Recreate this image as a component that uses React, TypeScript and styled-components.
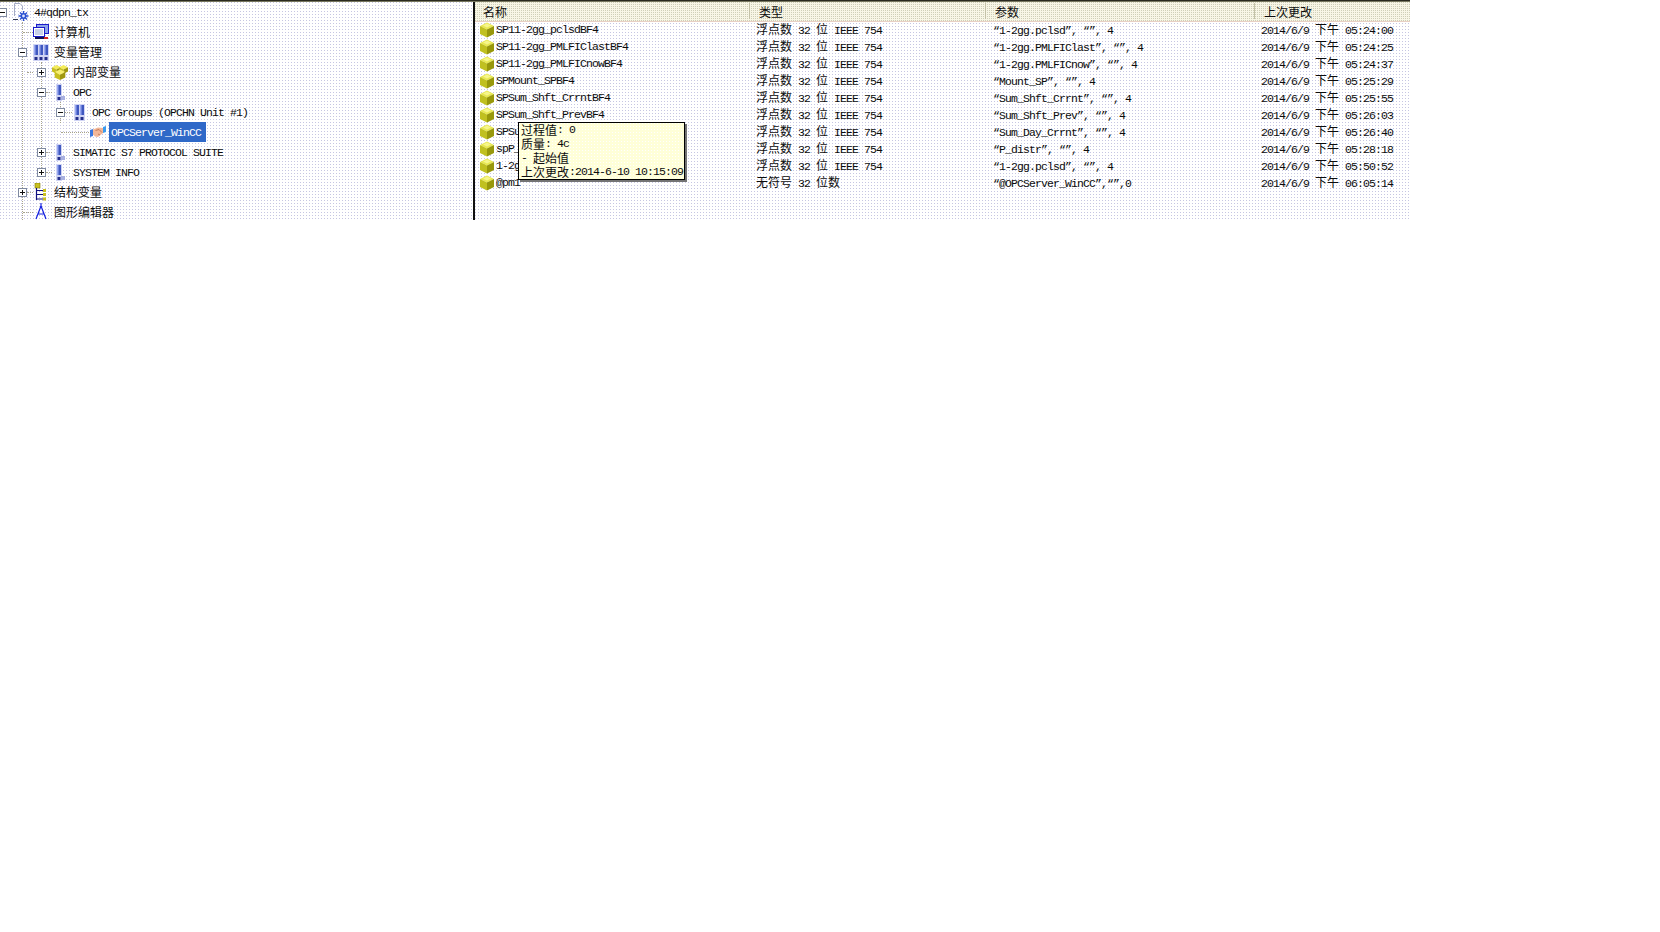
import React from "react";
import styled, { createGlobalStyle } from "styled-components";

const Global = createGlobalStyle`
  html, body { margin: 0; padding: 0; background: #fff; }
  body { font-family: "Liberation Mono", "Noto Sans CJK SC", monospace; }
`;

const Shot = styled.div`
  width: 1410px;
  height: 220px;
  display: flex;
  flex-direction: column;
  overflow: hidden;
  color: #0c0c0c;
`;
const TopRule = styled.div`
  height: 2px;
  flex: none;
  background: linear-gradient(#2a2a20 0 1px, #77775f 1px);
`;
const Panes = styled.div`
  flex: 1;
  display: flex;
  min-height: 0;
`;
const dots = `
  background-color: #fff;
  background-image: conic-gradient(from 270deg at 1px 1px, #c6c6e2 25%, transparent 0);
  background-size: 3px 3px;
`;
const TreePane = styled.div`
  width: 473px;
  flex: none;
  position: relative;
  overflow: hidden;
  ${dots}
`;
const Divider = styled.div`
  width: 2px;
  flex: none;
  background: #111;
`;
const ListPane = styled.div`
  flex: 1;
  position: relative;
  overflow: hidden;
  display: flex;
  flex-direction: column;
  ${dots}
`;

/* text */
const Latin = styled.span`
  font-family: "Liberation Mono", monospace;
  font-size: 11.5px;
  letter-spacing: -0.9px;
`;
const Cjk = styled.span`
  font-family: "Noto Sans CJK SC", sans-serif;
  font-size: 12px;
  letter-spacing: 0;
`;
const Txt = ({ s }: { s: string }) => (
  <>
    {s.split(/([\u4e00-\u9fff]+)/).map((p, i) =>
      p === "" ? null : /[\u4e00-\u9fff]/.test(p) ? <Cjk key={i}>{p}</Cjk> : <Latin key={i}>{p}</Latin>
    )}
  </>
);

/* tree */
const TreeRow = styled.div<{ $d: number }>`
  height: 20px;
  display: flex;
  align-items: center;
  white-space: pre;
  position: relative;
  z-index: 1;
  padding-left: ${(p) => Math.max(0, p.$d * 19 - 1)}px;
  line-height: 20px;
`;
const Toggle = styled.span<{ $d: number }>`
  width: 9px;
  height: 9px;
  flex: none;
  box-sizing: border-box;
  border: 1px solid #7f8aa0;
  background: #fff;
  position: relative;
  margin-left: ${(p) => (p.$d === 0 ? "-2px" : "0")};
  margin-right: 6px;
  &::before {
    content: "";
    position: absolute;
    left: 1px;
    top: 3px;
    width: 5px;
    height: 1px;
    background: #111;
  }
`;
const Plus = styled(Toggle)`
  &::after {
    content: "";
    position: absolute;
    left: 3px;
    top: 1px;
    width: 1px;
    height: 5px;
    background: #111;
  }
`;
const ToggleGap = styled.span`
  width: 15px;
  flex: none;
`;
const IconSlot = styled.span`
  width: 16px;
  height: 18px;
  flex: none;
  display: flex;
  align-items: center;
  justify-content: center;
  margin-right: 3px;
  svg { display: block; }
`;
const NodeLabel = styled.span<{ $sel?: boolean }>`
  padding: 0 5px 0 2px;
  height: 20px;
  display: block;
  background: ${(p) => (p.$sel ? "#2f69c8" : "transparent")};
  color: ${(p) => (p.$sel ? "#fff" : "inherit")};
`;
const GuideV = styled.i<{ $x: number; $top: number; $h: number }>`
  position: absolute;
  left: ${(p) => p.$x}px;
  top: ${(p) => p.$top}px;
  height: ${(p) => p.$h}px;
  border-left: 1px dotted #a8a48c;
`;
const GuideH = styled.i<{ $x: number; $top: number; $w: number }>`
  position: absolute;
  left: ${(p) => p.$x}px;
  top: ${(p) => p.$top}px;
  width: ${(p) => p.$w}px;
  border-top: 1px dotted #a8a48c;
`;

/* list */
const Header = styled.div`
  height: 20px;
  flex: none;
  display: grid;
  grid-template-columns: 274px 236px 269px 1fr;
  box-sizing: border-box;
  border-bottom: 1px solid #e8d0c4;
  background-color: #f8f6e6;
  background-image: conic-gradient(from 270deg at 1px 1px, #cfcfb8 25%, transparent 0);
  background-size: 2px 2px;
`;
const HeadCell = styled.div<{ $first?: boolean }>`
  padding-left: ${(p) => (p.$first ? "8px" : "9px")};
  border-left: ${(p) => (p.$first ? "none" : "1px solid #c4c2a8")};
  margin: 1px 0 0;
  height: 16px;
  display: flex;
  align-items: center;
`;
const Rows = styled.div`
  display: flex;
  flex-direction: column;
`;
const ListRow = styled.div`
  height: 17px;
  display: grid;
  grid-template-columns: 274px 236px 269px 1fr;
  grid-auto-rows: 16px;
  line-height: 16px;
  align-items: center;
  white-space: pre;
`;
const NameCell = styled.div`
  display: flex;
  align-items: center;
  padding-left: 4px;
`;
const CubeSlot = styled.span`
  width: 16px;
  height: 16px;
  flex: none;
  margin-right: 1px;
  svg { display: block; }
`;
const Cell = styled.div<{ $pad: number }>`
  padding-left: ${(p) => p.$pad}px;
`;

/* tooltip */
const Tip = styled.div`
  position: absolute;
  left: 43px;
  top: 120px;
  width: 167px;
  height: 58px;
  box-sizing: border-box;
  border: 1px solid #000;
  padding: 0 0 0 2px;
  background-color: #ffffd8;
  background-image: conic-gradient(from 270deg at 1px 1px, #fff 25%, transparent 0);
  background-size: 3px 3px;
  box-shadow: 2px 2px 0 rgba(70, 70, 70, 0.75);
  white-space: pre;
  z-index: 2;
`;
const TipLine = styled.div`
  height: 14px;
  line-height: 14px;
  display: flex;
  align-items: center;
`;

/* icons */
const Cube = () => (
  <svg width="16" height="16" viewBox="0 0 16 16">
    <polygon points="8,0.5 15,4 8,7.5 1,4" fill="#e8e850" />
    <polygon points="1,4 8,7.5 8,15.5 1,12" fill="#c0c020" />
    <polygon points="15,4 8,7.5 8,15.5 15,12" fill="#98980c" />
    <polygon points="8,1.5 12,3.5 8,5.5 4,3.5" fill="#f6f68c" />
  </svg>
);
const Cubes = () => (
  <svg width="18" height="17" viewBox="0 0 18 17">
    <polygon points="5,0 10,2.5 5,5 0,2.5" fill="#f4ec58" />
    <polygon points="0,2.5 5,5 5,10 0,7.5" fill="#c8c020" />
    <polygon points="10,2.5 5,5 5,10 10,7.5" fill="#a09810" />
    <polygon points="13,0 18,2.5 13,5 8,2.5" fill="#f4ec58" />
    <polygon points="8,2.5 13,5 13,10 8,7.5" fill="#c8c020" />
    <polygon points="18,2.5 13,5 13,10 18,7.5" fill="#a09810" />
    <polygon points="9,5 15,8 9,11 3,8" fill="#f8f070" />
    <polygon points="3,8 9,11 9,17 3,14" fill="#c8c020" />
    <polygon points="15,8 9,11 9,17 15,14" fill="#a09810" />
  </svg>
);
const Computer = () => (
  <svg width="16" height="16" viewBox="0 0 16 16">
    <rect x="3.5" y="0.5" width="12" height="9" fill="#8ea4e8" stroke="#1a1acc" />
    <rect x="0.5" y="3.5" width="11" height="9" fill="#fff" stroke="#1a1acc" />
    <rect x="2" y="5" width="8" height="6" fill="#c8d0e8" />
    <rect x="2" y="13" width="9" height="2" fill="#101050" />
    <rect x="11" y="13" width="4" height="2" fill="#d02020" />
  </svg>
);
const Bar = ({ x }: { x: number }) => (
  <g>
    <rect x={x} y="1" width="4" height="10" fill="#4058c0" />
    <rect x={x} y="1" width="1.5" height="10" fill="#98a8f0" />
    <rect x={x + 0.5} y="13" width="3" height="3" fill="#26308c" />
  </g>
);
const Bars3 = () => (
  <svg width="16" height="17" viewBox="0 0 16 17">
    <rect x="0" y="0" width="16" height="17" fill="#d0d4f4" />
    <Bar x={1} />
    <Bar x={6} />
    <Bar x={11} />
  </svg>
);
const Bars2 = () => (
  <svg width="11" height="17" viewBox="0 0 11 17">
    <rect x="0" y="0" width="11" height="17" fill="#d0d4f4" />
    <Bar x={1} />
    <Bar x={6} />
  </svg>
);
const Bar1 = () => (
  <svg width="9" height="17" viewBox="0 0 9 17">
    <rect x="0" y="0" width="6" height="17" fill="#d0d4f4" />
    <Bar x={1} />
    <rect x="5" y="12" width="4" height="4" fill="#a8b0e0" />
  </svg>
);
const Handshake = () => (
  <svg width="16" height="14" viewBox="0 0 16 14">
    <polygon points="0,5 3,4 3,11 0,12" fill="#3c78e0" />
    <polygon points="13,2 16,1 16,7 13,8" fill="#3c9cf0" />
    <path d="M3 4.5 L8 2.5 L13 3 L13 8 L8 12 L5 11.5 L3 9.5 Z" fill="#f4b898" />
    <path d="M5.5 5.5 L9 4.5 L12 7.5 M8 9 L10 10" fill="none" stroke="#c47c5c" />
  </svg>
);
const StructIcon = () => (
  <svg width="14" height="18" viewBox="0 0 14 18">
    <rect x="1" y="0" width="5" height="5" fill="#c8c020" stroke="#807800" strokeWidth="0.6" />
    <path d="M2.5 5 V17 M2.5 7.5 H9 M2.5 11.5 H9 M2.5 16 H9" stroke="#101080" strokeWidth="1.2" fill="none" />
    <rect x="9" y="6" width="3" height="3" fill="#c8c020" />
    <rect x="9" y="10" width="3" height="3" fill="#c8c020" />
    <rect x="9" y="14.5" width="3" height="3" fill="#c8c020" />
  </svg>
);
const Compass = () => (
  <svg width="14" height="18" viewBox="0 0 14 18">
    <path d="M7 0 V3 M7 3 L2 16 M7 3 L12 16 M3.5 11 H10.5" stroke="#1420e0" strokeWidth="1.2" fill="none" />
  </svg>
);
const RootIcon = () => (
  <svg width="16" height="18" viewBox="0 0 16 18">
    <path d="M1.5 0.5 H7 L9.5 3 V7" stroke="#a4acc4" fill="none" />
    <path d="M1.5 .5 V13" stroke="#a4acc4" fill="none" />
    <path d="M0 16.5 H5" stroke="#303850" fill="none" />
    <path d="M10.5 8 V18 M5.5 13 H15.5 M7 9.5 L14 16.5 M14 9.5 L7 16.5" stroke="#2a50d0" strokeWidth="1.4" />
    <circle cx="10.5" cy="13" r="3" fill="#2a50d0" />
    <circle cx="10.5" cy="13" r="1.4" fill="#dfe6ff" />
  </svg>
);

type Node = { d: number; t: "none" | "plus" | "minus"; icon: React.ReactNode; label: string; sel?: boolean };
const tree: Node[] = [
  { d: 0, t: "minus", icon: <RootIcon />, label: "4#qdpn_tx" },
  { d: 1, t: "none", icon: <Computer />, label: "计算机" },
  { d: 1, t: "minus", icon: <Bars3 />, label: "变量管理" },
  { d: 2, t: "plus", icon: <Cubes />, label: "内部变量" },
  { d: 2, t: "minus", icon: <Bar1 />, label: "OPC" },
  { d: 3, t: "minus", icon: <Bars2 />, label: "OPC Groups (OPCHN Unit #1)" },
  { d: 4, t: "none", icon: <Handshake />, label: "OPCServer_WinCC", sel: true },
  { d: 2, t: "plus", icon: <Bar1 />, label: "SIMATIC S7 PROTOCOL SUITE" },
  { d: 2, t: "plus", icon: <Bar1 />, label: "SYSTEM INFO" },
  { d: 1, t: "plus", icon: <StructIcon />, label: "结构变量" },
  { d: 1, t: "none", icon: <Compass />, label: "图形编辑器" },
];

const float = "浮点数 32 位 IEEE 754";
const rows = [
  ["SP11-2gg_pclsdBF4", float, "“1-2gg.pclsd”, “”, 4", "2014/6/9 下午 05:24:00"],
  ["SP11-2gg_PMLFIClastBF4", float, "“1-2gg.PMLFIClast”, “”, 4", "2014/6/9 下午 05:24:25"],
  ["SP11-2gg_PMLFICnowBF4", float, "“1-2gg.PMLFICnow”, “”, 4", "2014/6/9 下午 05:24:37"],
  ["SPMount_SPBF4", float, "“Mount_SP”, “”, 4", "2014/6/9 下午 05:25:29"],
  ["SPSum_Shft_CrrntBF4", float, "“Sum_Shft_Crrnt”, “”, 4", "2014/6/9 下午 05:25:55"],
  ["SPSum_Shft_PrevBF4", float, "“Sum_Shft_Prev”, “”, 4", "2014/6/9 下午 05:26:03"],
  ["SPSum_Day_CrrntBF4", float, "“Sum_Day_Crrnt”, “”, 4", "2014/6/9 下午 05:26:40"],
  ["spP_distrBF4", float, "“P_distr”, “”, 4", "2014/6/9 下午 05:28:18"],
  ["1-2gg_pclsdBF4", float, "“1-2gg.pclsd”, “”, 4", "2014/6/9 下午 05:50:52"],
  ["@pm1", "无符号 32 位数", "“@OPCServer_WinCC”,“”,0", "2014/6/9 下午 06:05:14"],
];

const tip = ["过程值: 0", "质量: 4c", "- 起始值", "上次更改:2014-6-10 10:15:09"];

export default function App() {
  return (
    <Shot>
      <Global />
      <TopRule />
      <Panes>
        <TreePane>
          <GuideV $x={22} $top={20} $h={200} />
          <GuideV $x={41} $top={60} $h={110} />
          <GuideV $x={60} $top={100} $h={21} />
          <GuideH $x={23} $top={30} $w={10} />
          <GuideH $x={46} $top={90} $w={6} />
          <GuideH $x={27} $top={70} $w={6} />
          <GuideH $x={65} $top={110} $w={7} />
          <GuideH $x={61} $top={130} $w={28} />
          <GuideH $x={46} $top={150} $w={6} />
          <GuideH $x={46} $top={170} $w={6} />
          <GuideH $x={27} $top={190} $w={6} />
          <GuideH $x={23} $top={210} $w={10} />
          {tree.map((n, i) => (
            <TreeRow key={i} $d={n.d}>
              {n.t === "none" ? (
                <ToggleGap />
              ) : n.t === "plus" ? (
                <Plus $d={n.d} />
              ) : (
                <Toggle $d={n.d} />
              )}
              <IconSlot>{n.icon}</IconSlot>
              <NodeLabel $sel={n.sel}>
                <Txt s={n.label} />
              </NodeLabel>
            </TreeRow>
          ))}
        </TreePane>
        <Divider />
        <ListPane>
          <Header>
            <HeadCell $first><Txt s="名称" /></HeadCell>
            <HeadCell><Txt s="类型" /></HeadCell>
            <HeadCell><Txt s="参数" /></HeadCell>
            <HeadCell><Txt s="上次更改" /></HeadCell>
          </Header>
          <Rows>
            {rows.map((r, i) => (
              <ListRow key={i}>
                <NameCell>
                  <CubeSlot><Cube /></CubeSlot>
                  <Txt s={r[0]} />
                </NameCell>
                <Cell $pad={7}><Txt s={r[1]} /></Cell>
                <Cell $pad={8}><Txt s={r[2]} /></Cell>
                <Cell $pad={7}><Txt s={r[3]} /></Cell>
              </ListRow>
            ))}
          </Rows>
          <Tip>
            {tip.map((l) => (
              <TipLine key={l}><Txt s={l} /></TipLine>
            ))}
          </Tip>
        </ListPane>
      </Panes>
    </Shot>
  );
}
